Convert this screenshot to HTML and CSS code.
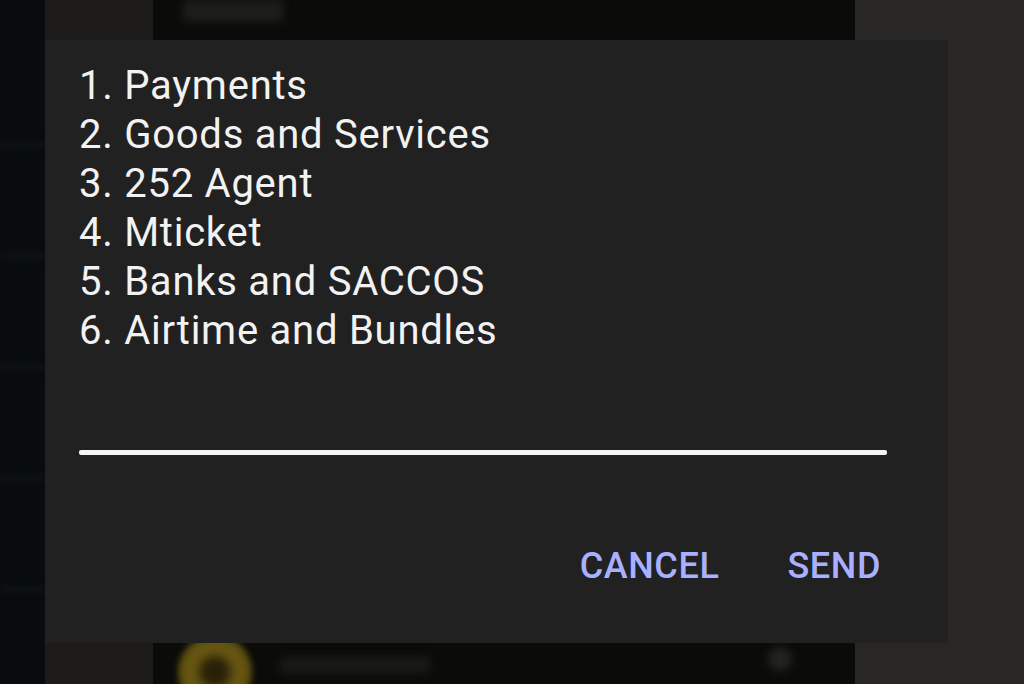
FILE: index.html
```html
<!DOCTYPE html>
<html>
<head>
<meta charset="utf-8">
<link rel="stylesheet" href="styles.css">
</head>
<body>
<div class="scene">
  <div class="col col-edge">
    <span class="line"></span><span class="line"></span><span class="line"></span><span class="line"></span><span class="line"></span>
  </div>
  <div class="col col-side"></div>
  <div class="col col-app">
    <div class="app-top"><span class="blur-box"></span></div>
    <div class="app-bottom">
      <span class="avatar"></span>
      <span class="blur-text"></span>
      <span class="blur-icon"></span>
    </div>
  </div>
  <div class="col col-right"></div>

  <div class="dialog">
    <div class="menu">
      <div class="item">1. Payments</div>
      <div class="item">2. Goods and Services</div>
      <div class="item">3. 252 Agent</div>
      <div class="item">4. Mticket</div>
      <div class="item">5. Banks and SACCOS</div>
      <div class="item">6. Airtime and Bundles</div>
    </div>
    <div class="field"></div>
    <div class="actions">
      <span class="btn">CANCEL</span>
      <span class="btn">SEND</span>
    </div>
  </div>
</div>
</body>
</html>
```

FILE: styles.css
```css
html, body {
  margin: 0;
  padding: 0;
  width: 1024px;
  height: 684px;
  overflow: hidden;
  background: #0b0b09;
}

.scene {
  position: relative;
  width: 1024px;
  height: 684px;
  display: flex;
}

.col {
  height: 100%;
}

.col-edge {
  width: 45px;
  background: #080c0e;
  display: flex;
  flex-direction: column;
  justify-content: space-around;
  padding: 90px 0 40px;
  box-sizing: border-box;
}

.col-edge .line {
  display: block;
  height: 6px;
  background: #101416;
  filter: blur(3px);
}

.col-side {
  width: 108px;
  background: #1c1b1a;
}

.col-app {
  width: 702px;
  background: #0b0b09;
  display: flex;
  flex-direction: column;
  justify-content: space-between;
}

.app-top {
  height: 40px;
  padding: 0 0 0 30px;
}

.blur-box {
  display: block;
  width: 100px;
  height: 22px;
  background: #1d1d1c;
  filter: blur(4px);
}

.app-bottom {
  height: 41px;
  display: flex;
  align-items: flex-start;
  padding-left: 25px;
  gap: 28px;
}

.avatar {
  display: block;
  width: 74px;
  height: 74px;
  margin-top: -8px;
  border-radius: 50%;
  background: radial-gradient(circle, #2a2108 0 10px, #6a5912 22px, #5a4c0e 37px);
  filter: blur(3px);
}

.blur-text {
  display: block;
  width: 150px;
  height: 16px;
  margin-top: 14px;
  background: #1a1a19;
  filter: blur(4px);
}

.blur-icon {
  display: block;
  width: 24px;
  height: 24px;
  margin-left: 310px;
  margin-top: 4px;
  border-radius: 50%;
  background: #222221;
  filter: blur(4px);
}

.col-right {
  flex: 1;
  background: #282725;
}

.dialog {
  position: absolute;
  left: 45px;
  top: 40px;
  width: 903px;
  height: 603px;
  background: #212121;
  box-sizing: border-box;
  padding: 21px 61px 0 34px;
  display: flex;
  flex-direction: column;
  font-family: Roboto, "Liberation Sans", sans-serif;
}

.menu {
  color: #f2f2f2;
  font-size: 40px;
  line-height: 49px;
  letter-spacing: 0.75px;
}

.field {
  margin-top: 95px;
  height: 5px;
  background: #f4f6f4;
  border-radius: 2px;
}

.actions {
  margin-top: 90px;
  display: flex;
  justify-content: flex-end;
  gap: 68px;
  padding-right: 6px;
}

.btn {
  color: #a8b0ff;
  font-size: 36px;
  font-weight: 500;
  letter-spacing: 0.6px;
}
```
